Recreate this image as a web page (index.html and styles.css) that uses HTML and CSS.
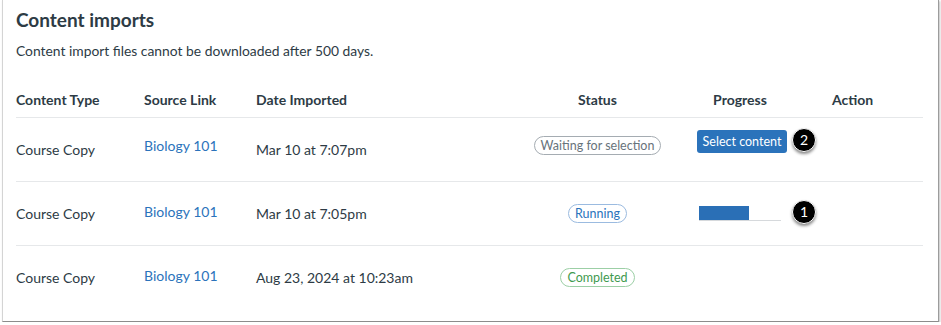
FILE: index.html
```html
<!DOCTYPE html>
<html lang="en">
  <head>
    <meta charset="utf-8">
    <meta name="viewport" content="width=device-width, initial-scale=1.0">
    <title>Content imports</title>
    <link rel="stylesheet" href="styles.css">
  </head>

  <body>
    <div class="frame">
      <h2>Content imports</h2>
      <p class="note">Content import files cannot be downloaded after 500 days.</p>
      <table class="imports">
        <thead>
          <tr>
            <th class="type">Content Type</th>
            <th class="source">Source Link</th>
            <th class="date">Date Imported</th>
            <th class="status">Status</th>
            <th class="progress">Progress</th>
            <th class="action">Action</th>
          </tr>
        </thead>
        <tbody>
          <tr class="pending">
            <td>Course Copy</td>
            <td class="source"><a href="#">Biology 101</a></td>
            <td>Mar 10 at 7:07pm</td>
            <td class="status"><span class="pill waiting">Waiting for selection</span></td>
            <td class="progress">
              <div class="cell-wrap">
                <button class="btn">Select content</button>
                <span class="marker">2</span>
              </div>
            </td>
            <td></td>
          </tr>
          <tr>
            <td>Course Copy</td>
            <td class="source"><a href="#">Biology 101</a></td>
            <td>Mar 10 at 7:05pm</td>
            <td class="status"><span class="pill running">Running</span></td>
            <td class="progress">
              <div class="cell-wrap">
                <div class="bar"><div class="fill" style="width: 61%"></div></div>
                <span class="marker">1</span>
              </div>
            </td>
            <td></td>
          </tr>
          <tr>
            <td>Course Copy</td>
            <td class="source"><a href="#">Biology 101</a></td>
            <td>Aug 23, 2024 at 10:23am</td>
            <td class="status"><span class="pill completed">Completed</span></td>
            <td class="progress"></td>
            <td></td>
          </tr>
        </tbody>
      </table>
    </div>
  </body>
</html>
```

FILE: styles.css
```css
* {
margin: 0;
padding: 0;
box-sizing: border-box;
font-family: Lato, "Noto Sans", sans-serif;
}

body {
background: #fff;
color: #2d3b45;
}

.frame {
margin: 0 2px 0 2px;
height: 322px;
padding: 8px 13px 0 13px;
border-left: 1px solid #d4d4d4;
border-right: 1px solid #9c9c9c;
border-bottom: 1px solid #8c8c8c;
box-shadow: 1px 1px 2px rgba(0,0,0,0.25);
}

h2 {
font-size: 19px;
line-height: 24px;
font-weight: 700;
}

.note {
margin-top: 9px;
font-size: 13.85px;
line-height: 20px;
}

.imports {
margin-top: 22px;
width: 907px;
border-collapse: collapse;
font-size: 14px;
}

.imports th {
height: 34px;
font-weight: 700;
text-align: left;
vertical-align: middle;
border-bottom: 1px solid #e6e8ea;
}

.imports td {
height: 64px;
vertical-align: middle;
border-bottom: 1px solid #e6e8ea;
}

.imports tbody tr:last-child td {
border-bottom: none;
}

.imports .type { width: 128px; }
.imports .source { width: 112px; }
.imports .date { width: 274px; }
.imports .status { width: 135px; text-align: center; }
.imports .progress { width: 150px; text-align: center; }
.imports th.action { padding-left: 17px; }

.imports td.source {
padding-bottom: 4px;
}

.pending td.source {
padding-bottom: 8px;
}

.pending td.status {
padding-bottom: 8px;
}

.pending td.progress {
padding-bottom: 16px;
}

.imports a {
color: #2b73bb;
text-decoration: none;
}

.pill {
display: inline-block;
padding: 0 6px;
font-size: 12.5px;
line-height: 17px;
border: 1px solid;
border-radius: 10px;
}

.pill.waiting {
color: #68737b;
border-color: #a5acb2;
}

.pill.running {
color: #2b73bb;
border-color: #9bbbe0;
}

.pill.completed {
color: #3f9a4f;
border-color: #9ccfa6;
}

.cell-wrap {
position: relative;
display: flex;
align-items: center;
padding-left: 32px;
}

.btn {
width: 90px;
height: 23px;
border: none;
border-radius: 3px;
background: #2b73bb;
color: #fff;
font-size: 12.5px;
}

.bar {
width: 82px;
height: 15px;
margin-left: 2px;
border-bottom: 1px solid #d6d9dc;
}

.fill {
height: 14px;
background: #2a6fb6;
}

.marker {
position: absolute;
left: 127px;
top: 50%;
width: 24px;
height: 24px;
margin-top: -13px;
border-radius: 50%;
background: #000;
border: 1px solid #fff;
box-shadow: 0 2px 3px rgba(0,0,0,0.45);
color: #fff;
font-size: 14px;
line-height: 22px;
text-align: center;
}
```
